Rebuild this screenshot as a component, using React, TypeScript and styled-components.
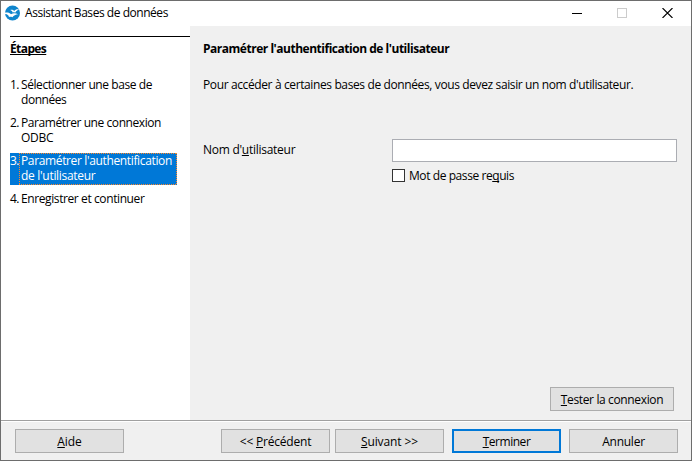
import React from "react";
import styled, { createGlobalStyle, css } from "styled-components";

const GlobalStyle = createGlobalStyle`
  * { box-sizing: border-box; }
  body {
    margin: 0;
    background: #6d6d6d;
    color: #000;
    font: 12px/15px "Open Sans", "Noto Sans", sans-serif;
  }
`;

const Window = styled.div`
  width: 692px;
  height: 461px;
  border: 1px solid #6d6d6d;
  background: #f0f0f0;
  display: flex;
  flex-direction: column;
`;

const Label = styled.span<{ $track?: number; $bold?: boolean }>`
  display: block;
  white-space: nowrap;
  font-weight: ${(p) => (p.$bold ? 700 : 400)};
  letter-spacing: ${(p) => p.$track ?? 0}px;
`;

const Key = styled.span`
  text-decoration: underline;
  text-decoration-thickness: 1px;
  text-underline-offset: 1px;
  text-decoration-skip-ink: none;
`;

const TitleBar = styled.header`
  height: 25px;
  flex: none;
  background: #fff;
  display: flex;
  padding: 4px 18px 0 3.5px;
  & > svg { display: block; flex: none; }
  & > ${Label} { margin-left: 5.5px; }
`;

const WindowControls = styled.div`
  margin-left: auto;
  display: flex;
  gap: 35px;
  padding-top: 3px;
  & svg { display: block; }
`;

const Body = styled.div`
  flex: 1;
  display: flex;
  min-height: 0;
`;

const Sidebar = styled.aside`
  width: 189px;
  background: #fff;
  padding: 10px 0 0 9px;
`;

const StepsHeading = styled.h2`
  margin: 0;
  padding-top: 4px;
  border-top: 1px solid #000;
  font-size: 12px;
`;

const StepList = styled.ol`
  list-style: none;
  margin: 21px 0 0;
  padding: 0;
  width: 167px;
  display: flex;
  flex-direction: column;
  gap: 8px;
`;

const Step = styled.li<{ $active?: boolean }>`
  display: grid;
  grid-template-columns: 11px 1fr;
  ${(p) =>
    p.$active &&
    css`
      background: #0078d7;
      color: #fff;
      height: 32px;
      margin-bottom: -2px;
    `}
`;

const StepText = styled.div<{ $focused?: boolean }>`
  position: relative;
  ${(p) =>
    p.$focused &&
    css`
      &::after {
        content: "";
        position: absolute;
        inset: 0 0 0 -2px;
        --h: repeating-linear-gradient(90deg, #ff8728 0 1px, transparent 1px 2px);
        --v: repeating-linear-gradient(180deg, #ff8728 0 1px, transparent 1px 2px);
        background: var(--h) top / 100% 1px no-repeat,
          var(--h) bottom / 100% 1px no-repeat,
          var(--v) left / 1px 100% no-repeat,
          var(--v) right / 1px 100% no-repeat;
      }
    `}
`;

const Page = styled.main`
  flex: 1;
  display: flex;
  flex-direction: column;
  padding: 15px 14px 0 13px;
`;

const Intro = styled.p`
  margin: 21px 0 0;
`;

const Form = styled.div`
  margin-top: 47px;
  display: grid;
  grid-template-columns: 189px 1fr;
  row-gap: 6px;
  & > ${Label} { padding-top: 3px; }
`;

const Input = styled.input`
  width: 285px;
  height: 23px;
  padding: 0 4px;
  border: 1px solid #abadb3;
  background: #fff;
  outline: none;
  font: inherit;
`;

const CheckRow = styled.label`
  grid-column: 2;
  display: flex;
  gap: 4px;
`;

const Checkbox = styled.input`
  appearance: none;
  width: 13px;
  height: 13px;
  margin: 1px 0 0;
  border: 1px solid #333;
  background: #fff;
`;

const Button = styled.button<{ $width?: number; $primary?: boolean }>`
  width: ${(p) => p.$width ?? 109}px;
  height: 24px;
  padding: 0;
  border: ${(p) => (p.$primary ? "2px solid #0078d7" : "1px solid #adadad")};
  border-radius: 0;
  background: #e1e1e1;
  color: #000;
  font: inherit;
  display: flex;
  align-items: center;
  justify-content: center;
`;

const TestRow = styled.div`
  margin: auto 3px 9px 0;
  display: flex;
  justify-content: flex-end;
`;

const Footer = styled.footer`
  height: 40px;
  flex: none;
  border-top: 1px solid #a0a0a0;
  box-shadow: inset 0 1px 0 #fff;
  padding: 8px 13px 0 14px;
  display: flex;
`;

const ButtonGroup = styled.div<{ $gap: number }>`
  display: flex;
  gap: ${(p) => p.$gap}px;
  margin-left: auto;
  & + & { margin-left: 8px; }
`;

const AppIcon = () => (
  <svg width="15" height="16" viewBox="0 0 15 16">
    <circle cx="7.5" cy="8" r="7.5" fill="#0e85cd" />
    <path
      d="M5.2 5.1C7 4.4 8.2 5 9.2 6.1C10.4 4.4 12.4 3.8 14.2 4.6C12.2 5 11.2 6.3 10.2 7.7C9.2 7.1 8.4 7.1 7.6 7.4C7.4 6.3 6.6 5.6 5.2 5.1Z"
      fill="#fff"
    />
    <path
      d="M0 7.6C2.6 7.1 4.7 7.6 6 9.2C8 7.9 10.8 8 13 9.2C10.6 9.4 8.8 10.4 7.4 12.2C6.2 11.6 5.2 11.6 4 12C3.6 10.2 2.2 8.8 0 9Z"
      fill="#fff"
    />
  </svg>
);

type StepData = { lines: [string, number][]; active?: boolean };

const STEPS: StepData[] = [
  { lines: [["Sélectionner une base de", -0.42], ["données", -0.46]] },
  { lines: [["Paramétrer une connexion", -0.42], ["ODBC", -0.3]] },
  { lines: [["Paramétrer l'authentification", -0.36], ["de l'utilisateur", -0.3]], active: true },
  { lines: [["Enregistrer et continuer", -0.4]] },
];

export default function App() {
  return (
    <>
      <GlobalStyle />
      <Window>
        <TitleBar>
          <AppIcon />
          <Label $track={-0.46}>Assistant Bases de données</Label>
          <WindowControls>
            <svg width="10" height="10" shapeRendering="crispEdges">
              <path d="M0 5.5H10" stroke="#000" />
            </svg>
            <svg width="10" height="10" shapeRendering="crispEdges">
              <rect x=".5" y=".5" width="9" height="9" fill="none" stroke="#ccc" />
            </svg>
            <svg width="11" height="10">
              <path d="M.5 0L10.5 10M10.5 0L.5 10" stroke="#000" strokeWidth="1.1" />
            </svg>
          </WindowControls>
        </TitleBar>
        <Body>
          <Sidebar>
            <StepsHeading>
              <Label $bold $track={-0.6}>
                <Key>Étapes</Key>
              </Label>
            </StepsHeading>
            <StepList>
              {STEPS.map((step, i) => (
                <Step key={i} $active={step.active}>
                  <Label $track={-0.7}>{i + 1}.</Label>
                  <StepText $focused={step.active}>
                    {step.lines.map(([text, track]) => (
                      <Label key={text} $track={track}>{text}</Label>
                    ))}
                  </StepText>
                </Step>
              ))}
            </StepList>
          </Sidebar>
          <Page>
            <Label $bold $track={-0.48}>
              Paramétrer l'authentification de l'utilisateur
            </Label>
            <Intro>
              <Label $track={-0.38}>
                Pour accéder à certaines bases de données, vous devez saisir un nom d'utilisateur.
              </Label>
            </Intro>
            <Form>
              <Label $track={-0.27}>Nom d'<Key>u</Key>tilisateur</Label>
              <Input />
              <CheckRow>
                <Checkbox type="checkbox" />
                <Label $track={-0.42}>Mot de passe re<Key>q</Key>uis</Label>
              </CheckRow>
            </Form>
            <TestRow>
              <Button $width={124}>
                <Label $track={-0.36}><Key>T</Key>ester la connexion</Label>
              </Button>
            </TestRow>
          </Page>
        </Body>
        <Footer>
          <Button><Label $track={-0.1}><Key>A</Key>ide</Label></Button>
          <ButtonGroup $gap={5}>
            <Button><Label $track={-0.2}>&lt;&lt; <Key>P</Key>récédent</Label></Button>
            <Button><Label $track={-0.1}><Key>S</Key>uivant &gt;&gt;</Label></Button>
          </ButtonGroup>
          <ButtonGroup $gap={8}>
            <Button $primary><Label $track={-0.46}><Key>T</Key>erminer</Label></Button>
            <Button><Label $track={-0.25}>Annuler</Label></Button>
          </ButtonGroup>
        </Footer>
      </Window>
    </>
  );
}
